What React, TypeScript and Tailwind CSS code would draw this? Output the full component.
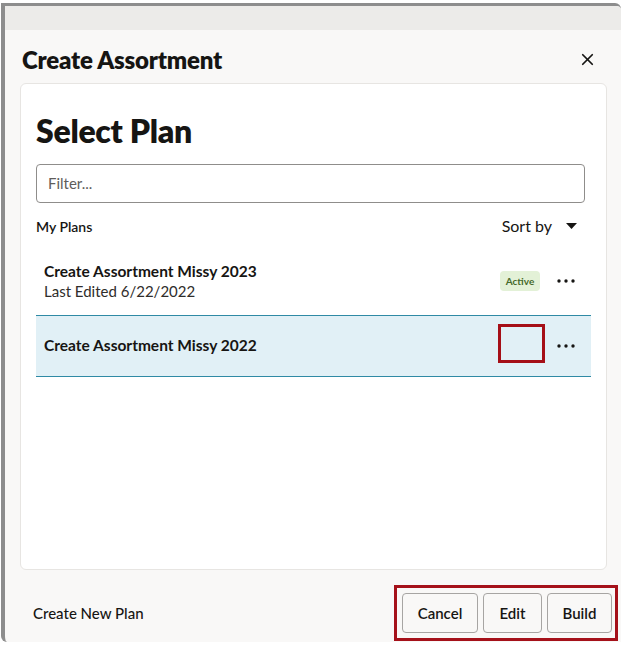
import { X } from "lucide-react";

function Dots() {
  return (
    <svg width="18" height="4" viewBox="0 0 18 4" className="text-[#161513]">
      <circle cx="2" cy="2" r="1.7" fill="currentColor" />
      <circle cx="9" cy="2" r="1.7" fill="currentColor" />
      <circle cx="16" cy="2" r="1.7" fill="currentColor" />
    </svg>
  );
}

export default function App() {
  return (
    <div className="w-[628px] h-[649px] bg-white overflow-hidden font-['Lato',sans-serif] text-[#161513]">
      <div className="ml-[1px] mt-[3px] w-[620px] h-[639px] border-l-[4px] border-t-[3px] border-[#8d8d8d] rounded-tr-[6px] rounded-bl-[6px] flex flex-col bg-[#f9f8f7]">
        {/* dimmed page strip behind the dialog header */}
        <div className="h-[24px] bg-[#ecebe9] rounded-tr-[4px]" />

        <div className="flex items-center justify-between pl-[17px] pr-[24px] h-[53px] pt-[6px]">
          <h1 className="text-[24px] font-extrabold tracking-[-0.2px] leading-none">Create Assortment</h1>
          <X size={19} strokeWidth={2.2} />
        </div>

        <div className="ml-[15px] mr-[14px] h-[487px] bg-white border border-[#e7e5e2] rounded-[6px] pl-[15px] pr-[15px] flex flex-col">
          <h2 className="pt-[29px] text-[32px] font-extrabold leading-[36px] tracking-[-0.3px]">Select Plan</h2>

          <div className="mt-[15px] mr-[6px] h-[39px] border border-[#8f8d8b] rounded-[4px] flex items-center pl-[11px]">
            <span className="text-[15px] text-[#5f5d5b]">Filter...</span>
          </div>

          <div className="mt-[10px] mr-[14px] h-[26px] flex items-center justify-between">
            <span className="text-[14px] font-semibold">My Plans</span>
            <div className="flex items-center gap-[14px]">
              <span className="text-[16px]">Sort by</span>
              <svg width="11" height="6" viewBox="0 0 11 6">
                <path d="M0 0 L11 0 L5.5 6 Z" fill="#161513" />
              </svg>
            </div>
          </div>

          <div className="mt-[10px] h-[66px] flex items-center justify-between pl-[8px] pr-[16px] pb-[2px]">
            <div className="flex flex-col">
              <span className="text-[15.5px] font-bold leading-[20px]">Create Assortment Missy 2023</span>
              <span className="text-[15px] leading-[20px] text-[#2f2d2b]">Last Edited 6/22/2022</span>
            </div>
            <div className="flex items-center gap-[17px]">
              <span className="w-[40px] h-[20px] rounded-[4px] bg-[#e3f1d7] text-[#46692a] text-[10px] font-bold flex items-center justify-center">
                Active
              </span>
              <Dots />
            </div>
          </div>

          <div className="h-[62px] bg-[#e1f0f6] border-y border-[#2f8aa5] flex items-center justify-between pl-[8px] pr-[16px]">
            <span className="text-[15.5px] font-bold leading-[20px] pb-[2px]">Create Assortment Missy 2022</span>
            <div className="flex items-center gap-[12px]">
              <div className="w-[47px] h-[39px] mb-[6px] border-[3px] border-[#a50f17]" />
              <Dots />
            </div>
          </div>
        </div>

        <div className="flex-1 flex items-start justify-between pl-[28px] pr-[3px] pt-[15px]">
          <span className="mt-[18px] text-[15px] leading-[20px] font-medium">Create New Plan</span>
          <div className="h-[56px] border-[3px] border-[#a5111a] flex items-center gap-[5px] pl-[5px] pr-[3px]">
            <button className="w-[76px] h-[40px] border border-[#a7a5a3] rounded-[4px] bg-[#f9f8f7] text-[15px] font-semibold">
              Cancel
            </button>
            <button className="w-[59px] h-[40px] border border-[#a7a5a3] rounded-[4px] bg-[#f9f8f7] text-[15px] font-semibold">
              Edit
            </button>
            <button className="w-[65px] h-[40px] border border-[#a7a5a3] rounded-[4px] bg-[#f9f8f7] text-[15px] font-semibold">
              Build
            </button>
          </div>
        </div>
      </div>
    </div>
  );
}
